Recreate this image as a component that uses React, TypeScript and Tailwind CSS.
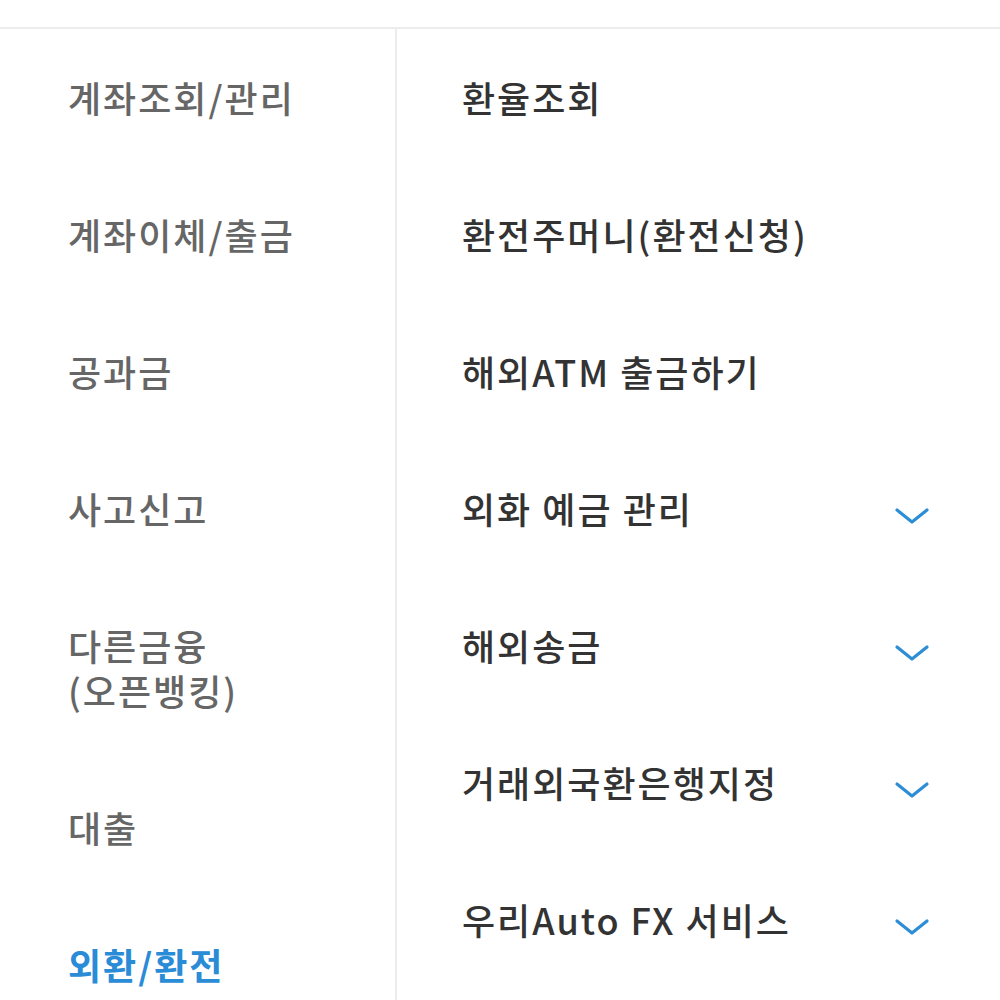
import React from "react";

const left: { label: string[]; active?: boolean }[] = [
  { label: ["계좌조회/관리"] },
  { label: ["계좌이체/출금"] },
  { label: ["공과금"] },
  { label: ["사고신고"] },
  { label: ["다른금융", "(오픈뱅킹)"] },
  { label: ["대출"] },
  { label: ["외환/환전"], active: true },
];

const right: { label: string; chevron?: boolean }[] = [
  { label: "환율조회" },
  { label: "환전주머니(환전신청)" },
  { label: "해외ATM 출금하기" },
  { label: "외화 예금 관리", chevron: true },
  { label: "해외송금", chevron: true },
  { label: "거래외국환은행지정", chevron: true },
  { label: "우리Auto FX 서비스", chevron: true },
];

function Chevron() {
  return (
    <svg width="36" height="20" viewBox="0 0 36 20" className="shrink-0">
      <path d="M3 4 L18 16 L33 4" fill="none" stroke="#2d8ed6" strokeWidth="3.2" strokeLinecap="round" strokeLinejoin="round" />
    </svg>
  );
}

export default function App() {
  return (
    <div
      className="w-[1000px] h-[1000px] overflow-hidden bg-white"
      style={{ fontFamily: '"Noto Sans CJK KR", "Noto Sans", sans-serif' }}
    >
      <div className="h-[27px]" />
      <div className="h-[2px] bg-[#ececec]" />
      <div className="flex">
        <div className="w-[395px] shrink-0 pl-[68px]">
          {left.map((it, i) => (
            <div key={i} className="py-[46px]">
              <div
                className={
                  "text-[36px] leading-[45px] tracking-[2px] whitespace-nowrap " +
                  (it.active ? "text-[#2a8bd6] font-bold" : "text-[#666666] font-medium")
                }
              >
                {it.label.map((l, j) => (
                  <React.Fragment key={j}>
                    {j > 0 && <br />}
                    {l}
                  </React.Fragment>
                ))}
              </div>
            </div>
          ))}
        </div>
        <div className="w-[2px] bg-[#ececec] shrink-0 self-stretch" />
        <div className="flex-1 pl-[65px] pr-[70px]">
          {right.map((it, i) => (
            <div key={i} className="py-[46px] flex items-center justify-between h-[137px]">
              <div className="text-[36px] leading-[45px] text-[#333333] font-medium tracking-[2px] whitespace-nowrap">
                {it.label}
              </div>
              {it.chevron && (
                <div className="mt-[14px]">
                  <Chevron />
                </div>
              )}
            </div>
          ))}
        </div>
      </div>
    </div>
  );
}
